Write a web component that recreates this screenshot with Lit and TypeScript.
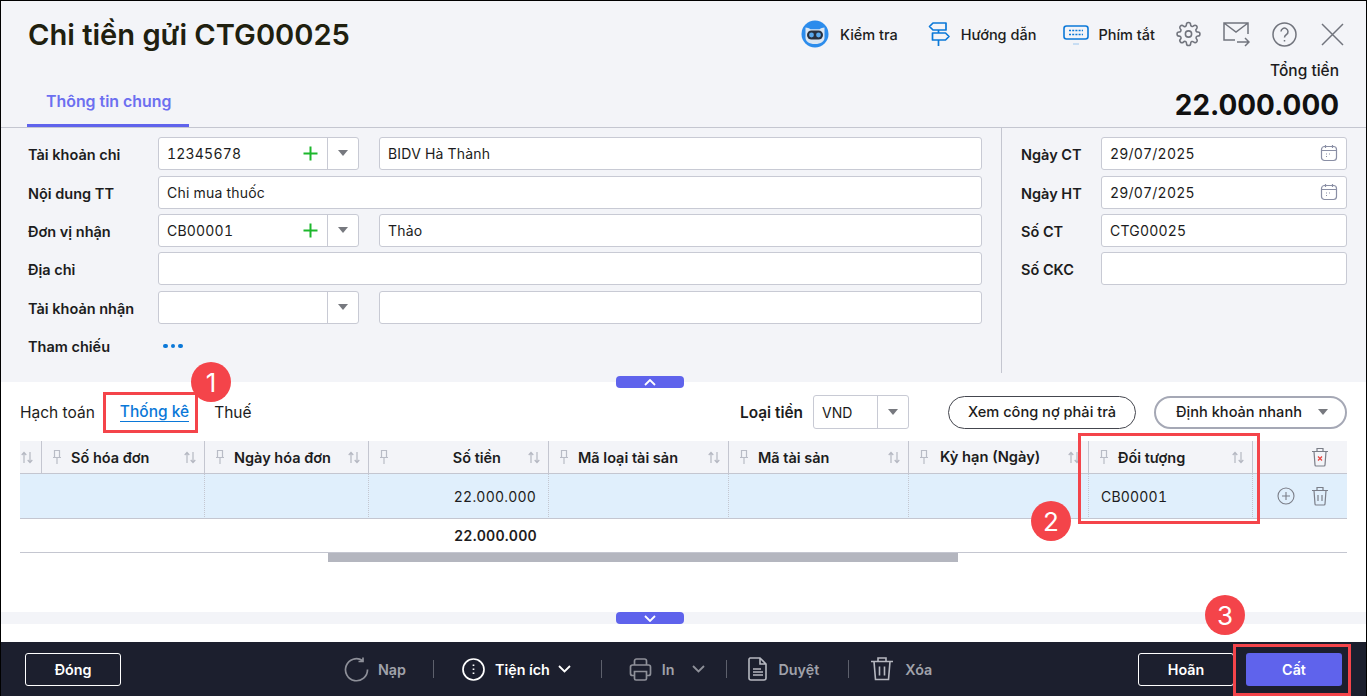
import { LitElement, html, css, svg } from "lit";
import { customElement } from "lit/decorators.js";

const pin = svg`<svg class="pin" width="12" height="16" viewBox="0 0 12 16" fill="none" stroke="#b9bcc6" stroke-width="1.200"><path d="M3.500 1.500h5v7h-5zM2 8.500h8M6 8.500V15"/></svg>`;
const sort = svg`<svg class="sort" width="12" height="13" viewBox="0 0 12 13" fill="none" stroke="#b5b8c2" stroke-width="1.200"><path d="M3 12V1.500M0.700 4L3 1.500 5.300 4M9 1v10.500M6.700 9L9 11.500 11.300 9"/></svg>`;
const calendar = svg`<svg width="18" height="18" viewBox="0 0 18 18" fill="none" stroke="#8a8fa5" stroke-width="1.200"><rect x="1.500" y="2.500" width="15" height="14" rx="3"/><path d="M1.500 6.500h15M5.500 1v3M12.500 1v3M6 10h1M9 10h1M6 12.500h1"/></svg>`;
const plus = svg`<svg width="15" height="15" viewBox="0 0 15 15" stroke="#1db72c" stroke-width="2"><path d="M7.500 0.500v14M0.500 7.500h14"/></svg>`;
const trashSm = (x: boolean) => svg`<svg width="18" height="20" viewBox="0 0 18 20" fill="none" stroke="#7b7e88" stroke-width="1.200"><path d="M1 4.500h16M6 4V1.500h6V4M3 4.500l1 13.500a1 1 0 0 0 1 1h8a1 1 0 0 0 1-1l1-13.500"/>${x ? svg`<path d="M7 9.500l4 4M11 9.500l-4 4" stroke="#e8423f"/>` : svg`<path d="M7 9v6M11 9v6"/>`}</svg>`;
const chev = (c: string) => svg`<svg width="13" height="8" viewBox="0 0 13 8" fill="none" stroke="${c}" stroke-width="1.800"><path d="M1 1l5.500 5.500L12 1"/></svg>`;

const cols = [
  { label: "", w: 22 },
  { label: "Số hóa đơn", w: 163 },
  { label: "Ngày hóa đơn", w: 164 },
  { label: "Số tiền", w: 180, right: true },
  { label: "Mã loại tài sản", w: 180 },
  { label: "Mã tài sản", w: 180 },
  { label: "Kỳ hạn (Ngày)", w: 180, ky: true },
  { label: "Đối tượng", w: 164 },
];

@customElement("app-root")
export class AppRoot extends LitElement {
  static styles = css`
    :host { display: block; width: 1367px; height: 696px; font-family: Inter, "Noto Sans", sans-serif; font-size: 14px; color: #1c1c20; }
    * { box-sizing: border-box; }
    .page { position: relative; width: 1367px; height: 696px; border: 1px solid #000; border-bottom: 0; display: flex; flex-direction: column; background: #fff; overflow: hidden; }
    .head { height: 127px; background: #f3f4f8; border-bottom: 1px solid #c4c6d0; display: flex; justify-content: space-between; padding: 0 22px 0 26px; }
    .head-l { display: flex; flex-direction: column; justify-content: space-between; }
    h1 { margin: 16px 0 0 1px; font-size: 29.100px; line-height: 36px; font-weight: 600; color: #20200f; }
    .tab { width: 162px; height: 41px; border-bottom: 3px solid #5f63ec; color: #6c6ff0; font-weight: 600; font-size: 15.900px; line-height: 24px; padding: 4px 0 0 19px; }
    .head-r { display: flex; flex-direction: column; align-items: flex-end; }
    .tools { display: flex; align-items: center; height: 34px; margin-top: 16px; font-weight: 500; font-size: 14.500px; }
    .tools span { white-space: nowrap; }
    .total-l { margin: 9px 5px 0 0; line-height: 22px; font-weight: 500; font-size: 15.500px; }
    .total-v { font-size: 27.900px; font-weight: 700; line-height: 36px; margin: 5px 5px 0 0; color: #111; }
    .form { height: 255px; background: #f3f4f8; display: flex; }
    .form-l { width: 1001px; height: 245px; border-right: 1px solid #c4c6d0; padding: 9px 19px 0 27px; display: flex; flex-direction: column; }
    .form-r { flex: 1; padding: 9px 19px 0 19px; display: flex; flex-direction: column; }
    .row { display: flex; align-items: center; height: 33px; flex: none; }
    .row + .row { margin-top: 5px; }
    .row:nth-child(2), .row:nth-child(5) { margin-top: 6px; }
    .lab { width: 130px; font-weight: 600; font-size: 14.500px; flex: none; padding-top: 2px; }
    .form-r .lab { width: 80px; }
    .inp { height: 33px; background: #fff; border: 1px solid #c8cad4; border-radius: 3px; display: flex; align-items: center; padding: 0 8px; flex: 1; font-size: 14px; letter-spacing: 0.2px; justify-content: space-between; font-variant-numeric: tabular-nums; }
    .combo { width: 201px; flex: none; height: 33px; background: #fff; border: 1px solid #c8cad4; border-radius: 3px; display: flex; margin-right: 20px; }
    .combo .val { flex: 1; display: flex; align-items: center; justify-content: space-between; padding: 0 9px 0 8px; letter-spacing: 0.2px; font-variant-numeric: tabular-nums; }
    .arrow { width: 31px; flex: none; border-left: 1px solid #c8cad4; display: flex; align-items: center; justify-content: center; }
    .tri { width: 0; height: 0; border-left: 5px solid transparent; border-right: 5px solid transparent; border-top: 6px solid #77797f; }
    .dots { display: flex; gap: 3px; margin-left: 5px; padding-top: 2px; }
    .dots i { width: 4.500px; height: 4.500px; border-radius: 50%; background: #0b78d8; }
    .lower { flex: 1; display: flex; flex-direction: column; padding: 0 19px; position: relative; }
    .bar { display: flex; align-items: center; height: 59px; padding-top: 1px; }
    .sub { font-size: 15.500px; margin-right: 25px; white-space: nowrap; }
    .sub.on { color: #0b78d8; font-weight: 500; border-bottom: 1px solid #0b78d8; line-height: 19px; }
    .spacer { flex: 1; }
    .cur-l { font-weight: 600; font-size: 15.400px; margin-right: 10px; }
    .cur { width: 96px; height: 34px; border: 1px solid #c8cad4; border-radius: 3px; display: flex; margin-right: 39px; }
    .cur .val { flex: 1; display: flex; align-items: center; padding-left: 8px; }
    .pill { height: 33px; border-radius: 17px; border: 1px solid #44464e; display: flex; align-items: center; justify-content: center; font-weight: 500; font-size: 14.600px; white-space: nowrap; }
    .pill.a { width: 188px; margin-right: 18px; }
    .pill.b { width: 193px; border: 2px solid #a5a8b5; gap: 16px; padding-left: 3px; }
    .grid { display: grid; grid-template-columns: 22px 163px 164px 180px 180px 180px 180px 164px 94px; }
    .th { height: 33px; background: #f3f4f8; border-bottom: 1px solid #c4c6d0; border-right: 1px solid #c4c6d0; display: flex; align-items: center; padding: 0 8px 0 9px; font-weight: 600; font-size: 14.500px; white-space: nowrap; }
    .th b { font-weight: 600; margin-left: 8px; flex: 1; }
    .th.right b { text-align: right; padding-right: 27px; }
    .th.ky b { margin-left: 10px; font-size: 14.700px; }
    .th.first { padding: 0 0 0 1px; }
    .th.act { border-right: 0; justify-content: flex-end; padding-right: 18px; }
    .td { height: 45px; background: #e0effc; border-bottom: 1px solid #c4c6d0; border-right: 1px dotted #c4c6d0; display: flex; align-items: center; padding: 0 12px; letter-spacing: 0.2px; font-variant-numeric: tabular-nums; }
    .td.right { justify-content: flex-end; }
    .td.act { border-right: 0; justify-content: flex-end; gap: 16px; padding-right: 18px; }
    .tf { height: 34px; border-bottom: 1px solid #c4c6d0; display: flex; align-items: center; padding: 0 12px; font-weight: 600; font-size: 14.200px; letter-spacing: 0.200px; font-variant-numeric: tabular-nums; }
    .tf.right { justify-content: flex-end; }
    .thumb { margin-left: 308px; width: 630px; height: 9px; background: #b4b6bf; }
    .band { height: 12px; background: #f3f4f8; margin: 50px -19px 0; }
    .gap { height: 18px; }
    .foot { height: 54px; background: #1c1f2e; display: flex; align-items: center; padding: 0 24px; color: #fff; font-weight: 600; font-size: 14.300px; }
    .btn { width: 96px; height: 33px; border: 1px solid #fff; border-radius: 3px; display: flex; align-items: center; justify-content: center; background: transparent; }
    .mid { display: flex; align-items: center; margin-left: 223px; flex: 1; }
    .it { display: flex; align-items: center; gap: 9px; white-space: nowrap; }
    .it.off { color: #a0a2aa; }
    .it.wide { gap: 11px; }
    .it.util, .it.pr { gap: 10px; }
    .it.util .ch { margin-left: -2px; display: flex; }
    .sep { width: 1px; height: 18px; background: #5d606c; flex: none; }
    .sep.nap { margin: 0 28px 0 27px; }
    .sep.util { margin: 0 27px 0 30px; }
    .sep.print { margin: 0 21px; }
    .sep.doc { margin: 0 21px 0 29px; }
    .in-chev { margin-left: 7px; display: flex; }
    .save { background: #5f63ec; border: 0; margin-left: 12px; }
    .handle { position: absolute; left: 615px; width: 68px; height: 12px; background: #5f63ec; border-radius: 4px; display: flex; align-items: center; justify-content: center; }
    .handle.up { top: 375px; }
    .handle.down { top: 611px; }
    .mark { position: absolute; border: 3px solid #f4444a; pointer-events: none; }
    .m1 { left: 102px; top: 391px; width: 95px; height: 41px; }
    .m2 { left: 1077px; top: 432px; width: 182px; height: 91px; }
    .m3 { left: 1232px; top: 643px; width: 118px; height: 52px; }
    .num { position: absolute; width: 40px; height: 40px; border-radius: 50%; background: #f4444a; color: #fff; font-size: 26px; display: flex; align-items: center; justify-content: center; }
    .n1 { left: 190px; top: 361px; }
    .n2 { left: 1030px; top: 500px; }
    .n3 { left: 1204px; top: 594px; }
    .mr11 { margin-right: 11px; } .mr30 { margin-right: 30px; } .mr10 { margin-right: 10px; } .mr27 { margin-right: 27px; }
    .mr9 { margin-right: 9px; } .mr21 { margin-right: 21px; } .mr22 { margin-right: 22px; } .mr24 { margin-right: 24px; }
  `;

  private field(label: string, value: string) {
    return html`<div class="row"><div class="lab">${label}</div><div class="inp">${value}</div></div>`;
  }

  private comboRow(label: string, code: string, name: string, add = true) {
    return html`<div class="row"><div class="lab">${label}</div>
      <div class="combo"><div class="val">${code}${add ? plus : ""}</div><div class="arrow"><div class="tri"></div></div></div>
      <div class="inp">${name}</div></div>`;
  }

  render() {
    return html`<div class="page">
      <div class="head">
        <div class="head-l">
          <h1>Chi tiền gửi CTG00025</h1>
          <div class="tab">Thông tin chung</div>
        </div>
        <div class="head-r">
          <div class="tools">
            <svg class="mr11" width="28" height="28" viewBox="0 0 28 28"><circle cx="14" cy="14" r="13.500" fill="#2c8cec"/><path d="M4.500 7.500c2 0 3.500.8 5 1.700h9c1.500-.9 3-1.700 5-1.700v10c0 4-3.500 6.500-9.500 6.500s-9.500-2.500-9.500-6.500z" fill="#dbe6f2"/><rect x="6" y="10.500" width="16" height="9" rx="4.500" fill="#27303f"/><circle cx="10.500" cy="15" r="2.400" fill="#5aa9ee"/><circle cx="17.500" cy="15" r="2.400" fill="#5aa9ee"/></svg>
            <span class="mr30">Kiểm tra</span>
            <svg class="mr10" width="23" height="26" viewBox="0 0 23 26" fill="none" stroke="#0b78d8" stroke-width="1.700" stroke-linejoin="round"><path d="M5 2h13v7H5L1.500 5.500zM4.500 12h13l3.500 3.500-3.500 3.500h-13zM10.500 9v3M10.500 19v6"/></svg>
            <span class="mr27">Hướng dẫn</span>
            <svg class="mr9" width="26" height="22" viewBox="0 0 26 22" fill="none" stroke="#0b78d8"><rect x="1" y="3" width="24" height="13" rx="2.500" stroke-width="1.600"/><path d="M6 7.500h14M6 11.500h14" stroke-width="1.600" stroke-dasharray="2 1.200"/><path d="M10 21h6" stroke="#9cc6ee"/></svg>
            <span class="mr21">Phím tắt</span>
            <svg class="mr22" width="25" height="26" viewBox="0 0 24 24" fill="none" stroke="#71747d" stroke-width="1.500"><circle cx="12" cy="12" r="3"/><path d="M19.400 15a1.650 1.650 0 0 0 .33 1.820l.06.06a2 2 0 1 1-2.830 2.830l-.06-.06a1.650 1.650 0 0 0-2.820 1.170V21a2 2 0 1 1-4 0v-.09A1.650 1.650 0 0 0 7.200 19.700l-.06.06a2 2 0 1 1-2.830-2.830l.06-.06a1.650 1.650 0 0 0-1.170-2.820H3a2 2 0 1 1 0-4h.09A1.650 1.650 0 0 0 4.300 7.200l-.06-.06a2 2 0 1 1 2.830-2.830l.06.06A1.650 1.650 0 0 0 10 3.200V3a2 2 0 1 1 4 0v.09a1.650 1.650 0 0 0 2.820 1.170l.06-.06a2 2 0 1 1 2.830 2.830l-.06.06A1.650 1.650 0 0 0 20.900 10H21a2 2 0 1 1 0 4h-.09a1.650 1.650 0 0 0-1.510 1z"/></svg>
            <svg class="mr22" width="27" height="26" viewBox="0 0 27 26" fill="none" stroke="#71747d" stroke-width="1.500"><path d="M12 19H1V2h24v11M1 2l12 9 12-9M14 21h12M22 17l4 4-4 4"/></svg>
            <svg class="mr24" width="25" height="25" viewBox="0 0 25 25" fill="none" stroke="#71747d" stroke-width="1.500"><circle cx="12.500" cy="12.500" r="11.500"/><path d="M9 9.500a3.500 3.500 0 1 1 5.500 3c-1.300.8-2 1.500-2 3M12.500 18v1.500"/></svg>
            <svg width="23" height="23" viewBox="0 0 23 23" stroke="#71747d" stroke-width="1.500"><path d="M1 1l21 21M22 1L1 22"/></svg>
          </div>
          <div class="total-l">Tổng tiền</div>
          <div class="total-v">22.000.000</div>
        </div>
      </div>

      <div class="form">
        <div class="form-l">
          ${this.comboRow("Tài khoản chi", "12345678", "BIDV Hà Thành")}
          ${this.field("Nội dung TT", "Chi mua thuốc")}
          ${this.comboRow("Đơn vị nhận", "CB00001", "Thảo")}
          ${this.field("Địa chỉ", "")}
          ${this.comboRow("Tài khoản nhận", "", "", false)}
          <div class="row"><div class="lab">Tham chiếu</div><div class="dots"><i></i><i></i><i></i></div></div>
        </div>
        <div class="form-r">
          <div class="row"><div class="lab">Ngày CT</div><div class="inp">29/07/2025${calendar}</div></div>
          <div class="row"><div class="lab">Ngày HT</div><div class="inp">29/07/2025${calendar}</div></div>
          ${this.field("Số CT", "CTG00025")}
          ${this.field("Số CKC", "")}
        </div>
      </div>

      <div class="lower">
        <div class="bar">
          <div class="sub">Hạch toán</div>
          <div class="sub on">Thống kê</div>
          <div class="sub">Thuế</div>
          <div class="spacer"></div>
          <div class="cur-l">Loại tiền</div>
          <div class="cur"><div class="val">VND</div><div class="arrow"><div class="tri"></div></div></div>
          <div class="pill a">Xem công nợ phải trả</div>
          <div class="pill b">Định khoản nhanh<div class="tri"></div></div>
        </div>
        <div class="grid">
          ${cols.map((c, i) => i === 0
            ? html`<div class="th first">${sort}</div>`
            : html`<div class="th ${c.right ? "right" : ""} ${c.ky ? "ky" : ""}">${pin}<b>${c.label}</b>${sort}</div>`)}
          <div class="th act">${trashSm(true)}</div>
          ${cols.map((c, i) => html`<div class="td ${c.right ? "right" : ""}">${i === 3 ? "22.000.000" : i === 7 ? "CB00001" : ""}</div>`)}
          <div class="td act">
            <svg width="18" height="18" viewBox="0 0 18 18" fill="none" stroke="#7b7e88" stroke-width="1.100"><circle cx="9" cy="9" r="8"/><path d="M9 5v8M5 9h8"/></svg>
            ${trashSm(false)}
          </div>
          ${cols.map((c, i) => html`<div class="tf ${c.right ? "right" : ""}">${i === 3 ? "22.000.000" : ""}</div>`)}
          <div class="tf"></div>
        </div>
        <div class="thumb"></div>
        <div class="band"></div>
        <div class="gap"></div>
      </div>

      <div class="foot">
        <div class="btn">Đóng</div>
        <div class="mid">
          <div class="it off"><svg width="25" height="25" viewBox="0 0 25 25" fill="none" stroke="#8e9099" stroke-width="1.700"><path d="M18.500 3.500A11 11 0 1 0 23.500 12.500M19 0.500v4h-4.500"/></svg>Nạp</div>
          <div class="sep nap"></div>
          <div class="it util"><svg width="23" height="23" viewBox="0 0 23 23" fill="none" stroke="#fff" stroke-width="1.700"><circle cx="11.500" cy="11.500" r="10.500"/><path d="M11.500 6.500v1.500M11.500 10.500v1.500M11.500 14.500v1.500"/></svg>Tiện ích<span class="ch">${chev("#fff")}</span></div>
          <div class="sep util"></div>
          <div class="it off pr"><svg width="23" height="23" viewBox="0 0 23 23" fill="none" stroke="#8e9099" stroke-width="1.700"><path d="M5.500 7V3a2 2 0 0 1 2-2h8a2 2 0 0 1 2 2v4M5.500 17.500H3.500a2 2 0 0 1-2-2V9a2 2 0 0 1 2-2h16a2 2 0 0 1 2 2v6.500a2 2 0 0 1-2 2h-2M5.500 13.500h12v7a1.500 1.500 0 0 1-1.500 1.500H7a1.500 1.500 0 0 1-1.500-1.500z"/></svg>In<span class="in-chev">${chev("#8e9099")}</span></div>
          <div class="sep print"></div>
          <div class="it off wide"><svg width="20" height="24" viewBox="0 0 20 24" fill="none" stroke="#b6b8c0" stroke-width="1.600"><path d="M2 1h10l6 6v14a2 2 0 0 1-2 2H3a2 2 0 0 1-2-2V2zM12 1v6h6M5 12h8M5 15h10M5 18h10"/></svg>Duyệt</div>
          <div class="sep doc"></div>
          <div class="it off wide"><svg width="24" height="24" viewBox="0 0 24 24" fill="none" stroke="#b6b8c0" stroke-width="1.600"><path d="M1 4.500h22M8 4V1h8v3M4 4.500l1.500 18h13l1.500-18M9.500 9.500v9M14.500 9.500v9"/></svg>Xóa</div>
        </div>
        <div class="btn">Hoãn</div>
        <div class="btn save">Cất</div>
      </div>

      <div class="handle up"><svg width="12" height="7" viewBox="0 0 12 7" fill="none" stroke="#fff" stroke-width="1.800"><path d="M1 6l5-5 5 5"/></svg></div>
      <div class="handle down"><svg width="12" height="7" viewBox="0 0 12 7" fill="none" stroke="#fff" stroke-width="1.800"><path d="M1 1l5 5 5-5"/></svg></div>

      <div class="mark m1"></div>
      <div class="mark m2"></div>
      <div class="mark m3"></div>
      <div class="num n1">1</div>
      <div class="num n2">2</div>
      <div class="num n3">3</div>
    </div>`;
  }
}
